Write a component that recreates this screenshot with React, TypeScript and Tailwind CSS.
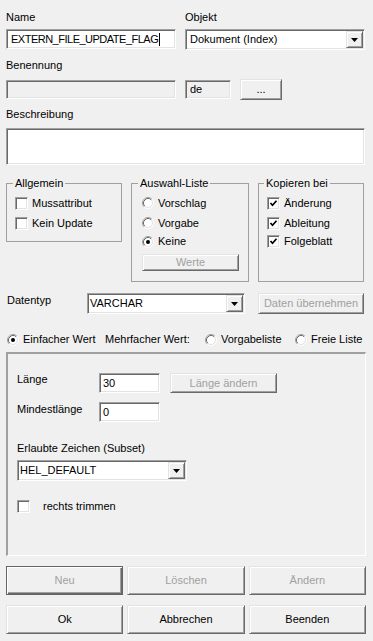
import React from 'react';

const sunken =
  'border border-t-[#a0a0a0] border-l-[#a0a0a0] border-r-white border-b-white shadow-[inset_1px_1px_0_#696969,inset_-1px_-1px_0_#e3e3e3]';
const raised =
  'border border-t-[#e3e3e3] border-l-[#e3e3e3] border-r-[#696969] border-b-[#696969] shadow-[inset_1px_1px_0_#ffffff,inset_-1px_-1px_0_#a0a0a0] bg-[#f0f0f0]';
const defaultBtn =
  'border border-[#646464] bg-[#f0f0f0] shadow-[inset_1px_1px_0_#ffffff,inset_-1px_-1px_0_#696969,inset_-2px_-2px_0_#a0a0a0]';

function Radio({ checked }: { checked?: boolean }) {
  return (
    <svg width="12" height="12" viewBox="0 0 12 12" className="shrink-0">
      <circle cx="6" cy="6" r="4.5" fill="#ffffff" />
      <path d="M2.11 9.89A5.5 5.5 0 0 1 9.89 2.11" fill="none" stroke="#a0a0a0" />
      <path d="M9.89 2.11A5.5 5.5 0 0 1 2.11 9.89" fill="none" stroke="#ffffff" />
      <path d="M2.82 9.18A4.5 4.5 0 0 1 9.18 2.82" fill="none" stroke="#696969" />
      <path d="M9.18 2.82A4.5 4.5 0 0 1 2.82 9.18" fill="none" stroke="#e3e3e3" />
      {checked && <circle cx="6" cy="6" r="2" fill="#000000" />}
    </svg>
  );
}

function Check({ checked }: { checked?: boolean }) {
  return (
    <span className={`${sunken} bg-white w-[13px] h-[13px] flex items-center justify-center shrink-0`}>
      {checked && (
        <svg width="9" height="9" viewBox="0 0 9 9">
          <path d="M1.5 4 L3.5 6.2 L7.5 1.8" fill="none" stroke="#000" strokeWidth="1.7" />
        </svg>
      )}
    </span>
  );
}

function Select({ value, className = '', textPad = 'pl-[1px]' }: { value: string; className?: string; textPad?: string }) {
  return (
    <div className={`${sunken} bg-white p-[1px] flex items-stretch ${className}`}>
      <span className={`flex-1 flex items-center ${textPad}`}>{value}</span>
      <span className={`${raised} w-[17px] flex items-center justify-center`}>
        <svg width="7" height="4" viewBox="0 0 7 4">
          <path d="M0 0h7L3.5 4z" fill="#000" />
        </svg>
      </span>
    </div>
  );
}

function Btn({
  children,
  disabled,
  isDefault,
  className = '',
}: {
  children: React.ReactNode;
  disabled?: boolean;
  isDefault?: boolean;
  className?: string;
}) {
  return (
    <button
      type="button"
      className={`${isDefault ? defaultBtn : raised} flex items-center justify-center ${
        disabled ? 'text-[#a0a0a0]' : 'text-black'
      } ${className}`}
    >
      {children}
    </button>
  );
}

export default function App() {
  return (
    <div className="w-[373px] h-[641px] overflow-hidden bg-[#f0f0f0] text-black text-[11px] leading-[13px] font-['Liberation_Sans',Arial,sans-serif] px-[6px] pt-[11px]">
      {/* Name / Objekt */}
      <div className="flex gap-[9px]">
        <div className="w-[170px]">
          <div>Name</div>
          <div className={`${sunken} bg-white mt-[5px] h-[20px] flex items-center pl-[4px]`}>
            <span className="tracking-[-0.5px]">EXTERN_FILE_UPDATE_FLAG</span>
            <span className="w-px h-[13px] bg-black ml-[1px]" />
          </div>
        </div>
        <div className="w-[180px]">
          <div>Objekt</div>
          <Select className="mt-[5px] h-[21px]" textPad="pl-[3px]" value="Dokument (Index)" />
        </div>
      </div>

      {/* Benennung */}
      <div className="mt-[9px]">Benennung</div>
      <div className="flex items-center mt-[7px] h-[21px]">
        <div className={`${sunken} bg-[#f0f0f0] w-[170px] h-[19px]`} />
        <div className={`${sunken} bg-[#f0f0f0] w-[46px] h-[19px] ml-[9px] flex items-center pl-[4px]`}>de</div>
        <Btn className="ml-[9px] w-[42px] h-[21px]">...</Btn>
      </div>

      {/* Beschreibung */}
      <div className="mt-[8px]">Beschreibung</div>
      <div className={`${sunken} bg-white mt-[7px] h-[37px] w-[359px]`} />

      {/* Groups */}
      <div className="flex items-start mt-[12px]">
        <fieldset className="border border-[#a0a0a0] w-[116px] h-[65px]">
          <legend className="ml-[6px] px-[2px]">Allgemein</legend>
          <div className="pl-[8px] pt-[3px]">
            <div className="flex items-center gap-[4px] h-[20px]">
              <Check />
              Mussattribut
            </div>
            <div className="flex items-center gap-[4px] h-[20px]">
              <Check />
              Kein Update
            </div>
          </div>
        </fieldset>

        <fieldset className="border border-[#a0a0a0] w-[118px] h-[105px] ml-[9px]">
          <legend className="ml-[6px] px-[2px]">Auswahl-Liste</legend>
          <div className="pl-[10px] pt-[3px]">
            <div className="flex items-center gap-[4px] h-[20px]">
              <Radio />
              Vorschlag
            </div>
            <div className="flex items-center gap-[4px] h-[20px]">
              <Radio />
              Vorgabe
            </div>
            <div className="flex items-center gap-[4px] h-[17px]">
              <Radio checked />
              Keine
            </div>
            <Btn disabled className="mt-[4px] w-[97px] h-[17px]">
              Werte
            </Btn>
          </div>
        </fieldset>

        <fieldset className="border border-[#a0a0a0] w-[106px] h-[105px] ml-[9px]">
          <legend className="ml-[5px] px-[2px]">Kopieren bei</legend>
          <div className="pl-[8px] pt-[3px]">
            <div className="flex items-center gap-[4px] h-[20px]">
              <Check checked />
              Änderung
            </div>
            <div className="flex items-center gap-[4px] h-[20px]">
              <Check checked />
              Ableitung
            </div>
            <div className="flex items-center gap-[4px] h-[17px]">
              <Check checked />
              Folgeblatt
            </div>
          </div>
        </fieldset>
      </div>

      {/* Datentyp */}
      <div className="flex items-start mt-[11px]">
        <div className="w-[81px] pt-[1px] pl-[1px]">Datentyp</div>
        <Select className="w-[158px] h-[21px]" value="VARCHAR" />
        <Btn disabled className="ml-[13px] w-[106px] h-[21px]">
          Daten übernehmen
        </Btn>
      </div>

      {/* Wert-Art */}
      <div className="flex items-center mt-[19px] h-[13px]">
        <div className="w-[99px] flex items-center gap-[4px] pl-[1px]">
          <Radio checked />
          Einfacher Wert
        </div>
        <div className="w-[100px]">Mehrfacher Wert:</div>
        <div className="w-[90px] flex items-center gap-[4px]">
          <Radio />
          Vorgabeliste
        </div>
        <div className="flex items-center gap-[4px]">
          <Radio />
          Freie Liste
        </div>
      </div>

      {/* Details panel */}
      <div className="mt-[6px] w-[360px] h-[204px] border-t-2 border-l-2 border-r border-b border-t-[#a0a0a0] border-l-[#a0a0a0] border-r-white border-b-white">
        <div className="pl-[9px] pt-[19px]">
          <div className="flex items-start">
            <div className="w-[82px]">Länge</div>
            <div className={`${sunken} bg-white w-[61px] h-[20px] flex items-center pl-[3px]`}>30</div>
            <Btn disabled className="ml-[10px] w-[107px] h-[20px]">
              Länge ändern
            </Btn>
          </div>
          <div className="flex items-start mt-[9px]">
            <div className="w-[82px] pt-[1px]">Mindestlänge</div>
            <div className={`${sunken} bg-white w-[61px] h-[20px] flex items-center pl-[3px]`}>0</div>
          </div>
          <div className="mt-[20px]">Erlaubte Zeichen (Subset)</div>
          <Select className="mt-[5px] w-[170px] h-[21px]" value="HEL_DEFAULT" />
          <div className="flex items-center mt-[19px] h-[13px]">
            <Check />
            <span className="ml-[13px]">rechts trimmen</span>
          </div>
        </div>
      </div>

      {/* Buttons */}
      <div className="grid grid-cols-3 gap-x-[4px] w-[360px] mt-[10px]">
        <Btn disabled isDefault className="h-[29px]">
          Neu
        </Btn>
        <Btn disabled className="h-[29px]">
          Löschen
        </Btn>
        <Btn disabled className="h-[29px]">
          Ändern
        </Btn>
      </div>
      <div className="grid grid-cols-3 gap-x-[4px] w-[360px] mt-[10px]">
        <Btn className="h-[29px]">Ok</Btn>
        <Btn className="h-[29px]">Abbrechen</Btn>
        <Btn className="h-[29px]">Beenden</Btn>
      </div>
    </div>
  );
}
